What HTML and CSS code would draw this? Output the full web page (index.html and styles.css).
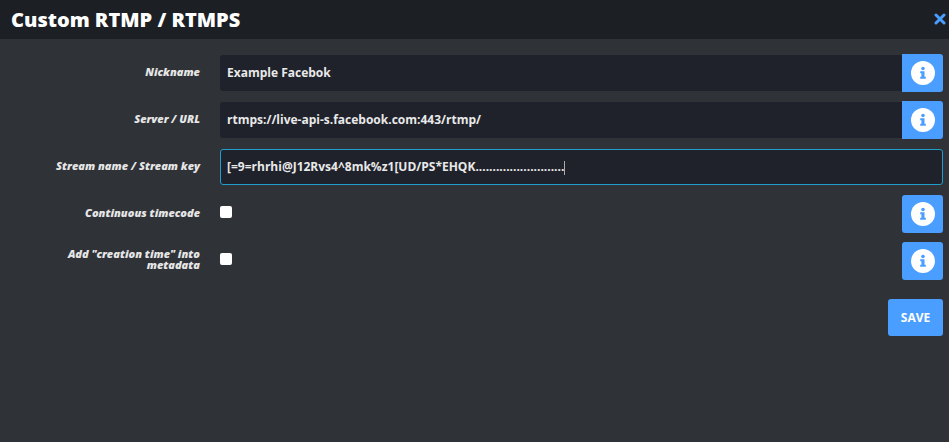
FILE: index.html
```html
<!DOCTYPE html>
<html lang="en">
<head>
<meta charset="utf-8">
<title>Custom RTMP / RTMPS</title>
<link rel="stylesheet" href="styles.css">
</head>
<body>
<header class="header">
  <h1 class="title">Custom RTMP / RTMPS</h1>
  <button class="close" aria-label="Close">
    <svg viewBox="0 0 12 12" width="12" height="12"><path d="M2 2l8 8M10 2l-8 8" stroke="#4a9eff" stroke-width="3" stroke-linecap="round" fill="none"/></svg>
  </button>
</header>
<main class="form">
  <div class="row">
    <div class="label">Nickname</div>
    <div class="field">Example Facebok</div>
    <button class="info" aria-label="Info"><svg viewBox="0 0 24 24" width="24" height="24"><circle cx="12" cy="12" r="12" fill="#fff"/><circle cx="12" cy="7.500" r="1.800" fill="#4a9eff"/><path d="M9.200 10.300h4.300v5.500h1.300v1.900H9.200v-1.900h1.200v-3.600H9.200z" fill="#4a9eff"/></svg></button>
  </div>
  <div class="row">
    <div class="label">Server / URL</div>
    <div class="field">rtmps://live-api-s.facebook.com:443/rtmp/</div>
    <button class="info" aria-label="Info"><svg viewBox="0 0 24 24" width="24" height="24"><circle cx="12" cy="12" r="12" fill="#fff"/><circle cx="12" cy="7.500" r="1.800" fill="#4a9eff"/><path d="M9.200 10.300h4.300v5.500h1.300v1.900H9.200v-1.900h1.200v-3.600H9.200z" fill="#4a9eff"/></svg></button>
  </div>
  <div class="row">
    <div class="label">Stream name / Stream key</div>
    <div class="field field-focus">[=9=rhrhi@J12Rvs4^8mk%z1[UD/PS*EHQK..........................<span class="caret"></span></div>
  </div>
  <div class="row">
    <div class="label">Continuous timecode</div>
    <div class="check-cell"><input class="check" type="checkbox"></div>
    <button class="info" aria-label="Info"><svg viewBox="0 0 24 24" width="24" height="24"><circle cx="12" cy="12" r="12" fill="#fff"/><circle cx="12" cy="7.500" r="1.800" fill="#4a9eff"/><path d="M9.200 10.300h4.300v5.500h1.300v1.900H9.200v-1.900h1.200v-3.600H9.200z" fill="#4a9eff"/></svg></button>
  </div>
  <div class="row">
    <div class="label">Add "creation time" into metadata</div>
    <div class="check-cell"><input class="check" type="checkbox"></div>
    <button class="info" aria-label="Info"><svg viewBox="0 0 24 24" width="24" height="24"><circle cx="12" cy="12" r="12" fill="#fff"/><circle cx="12" cy="7.500" r="1.800" fill="#4a9eff"/><path d="M9.200 10.300h4.300v5.500h1.300v1.900H9.200v-1.900h1.200v-3.600H9.200z" fill="#4a9eff"/></svg></button>
  </div>
  <div class="actions"><button class="save">SAVE</button></div>
</main>
</body>
</html>
```
FILE: styles.css
```css
* { box-sizing: border-box; }
html, body { height: 100%; }
body {
  margin: 0;
  background: #2f3237;
  color: #fff;
  font-family: "Open Sans", sans-serif;
  overflow: hidden;
}
.header {
  height: 39px;
  background: #1c1f24;
  display: flex;
  align-items: center;
  justify-content: space-between;
  padding: 0 3px 0 11px;
}
.title {
  margin: 0;
  font-size: 20px;
  font-weight: 800;
  line-height: 39px;
}
.close {
  border: 0;
  padding: 0;
  background: none;
  display: flex;
  margin-top: -1px;
}
.form {
  padding: 15px 6px 0 0;
  display: flex;
  flex-direction: column;
  gap: 9px;
}
.row {
  display: grid;
  grid-template-columns: 200px 1fr 41px;
  height: 38px;
  align-items: center;
}
.label {
  padding-left: 50px;
  font-size: 11px;
  font-weight: 800;
  font-style: italic;
  text-align: right;
  color: #e6e6e6;
  line-height: 11px;
  margin-top: -4px;
}
.field {
  height: 36px;
  margin-left: 20px;
  background: #1f222b;
  border-radius: 3px 0 0 3px;
  padding: 0 7px;
  font-size: 12px;
  font-weight: 700;
  line-height: 36px;
  color: #e9e9e9;
  white-space: nowrap;
  overflow: hidden;
}
.field-focus {
  grid-column: 2 / 4;
  height: 36px;
  border: 1px solid #1f9ecb;
  border-radius: 3px;
  padding: 0 6px;
  line-height: 34px;
}
.caret {
  display: inline-block;
  width: 1px;
  height: 14px;
  background: #aaa;
  vertical-align: middle;
}
.check-cell { display: flex; margin: -4px 0 0 20px; }
.check {
  appearance: none;
  width: 12px;
  height: 12px;
  margin: 0;
  background: #fff;
  border-radius: 2px;
}
.info {
  width: 41px;
  height: 38px;
  border: 0;
  padding: 0;
  background: #4a9eff;
  border-radius: 0 3px 3px 0;
  display: flex;
  align-items: center;
  justify-content: center;
}
.row:nth-child(n+4) .info { border-radius: 3px; }
.actions {
  display: flex;
  justify-content: flex-end;
  margin-top: 10px;
}
.save {
  width: 55px;
  height: 37px;
  border: 0;
  background: #4a9eff;
  border-radius: 3px;
  color: #fff;
  font-family: "Open Sans", sans-serif;
  font-size: 12px;
  font-weight: 700;
}
```
